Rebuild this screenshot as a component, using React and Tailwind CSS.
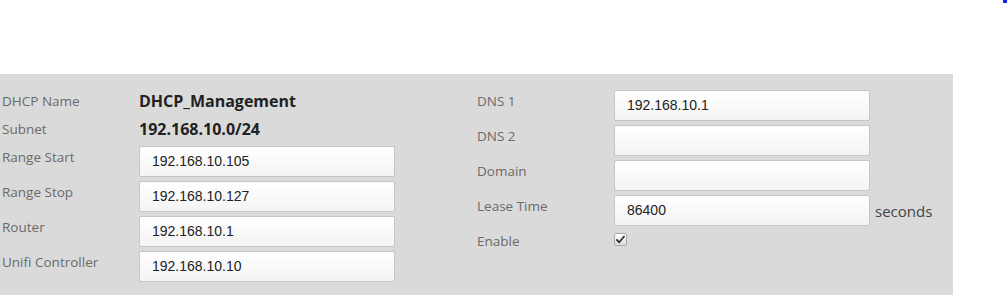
import React from 'react';

const Field = ({ value }) => (
  <div className="h-[31px] w-[256px] rounded-[2px] border border-[#c6c6c6] bg-gradient-to-b from-white to-[#f4f4f4] pl-[12px] flex items-center font-['Liberation_Sans',Arial,sans-serif] text-[14px] text-[#222]">
    {value}
  </div>
);

const Row = ({ label, labelWidth, children }) => (
  <div className="flex h-[35px] items-start">
    <div className={`${labelWidth} pt-[2px] leading-[18px] text-[13.5px] text-[#6a6a6a]`}>{label}</div>
    {children}
  </div>
);

const App = () => {
  const leftInputs = [
    ['Range Start', '192.168.10.105'],
    ['Range Stop', '192.168.10.127'],
    ['Router', '192.168.10.1'],
    ['Unifi Controller', '192.168.10.10'],
  ];
  const rightInputs = [
    ['DNS 1', '192.168.10.1'],
    ['DNS 2', ''],
    ['Domain', ''],
  ];

  return (
    <div className="relative h-[295px] w-[1007px] bg-white font-['Open_Sans',sans-serif]">
      {/* small link fragment at the top right */}
      <div className="absolute right-0 top-0 h-[3px] w-[4px] bg-[#1a1aff]" />

      <div className="pt-[74px]">
        <div className="flex h-[221px] w-[953px] bg-[#dadada]">
          {/* Left column */}
          <div className="w-[477px] pl-[2px]">
            <div className="flex h-[28px] items-center mt-[13px]">
              <div className="w-[137px] text-[13.5px] text-[#6a6a6a]">DHCP Name</div>
              <div className="text-[16px] font-bold text-[#222]">DHCP_Management</div>
            </div>
            <div className="flex h-[28px] items-center">
              <div className="w-[137px] text-[13.5px] text-[#6a6a6a]">Subnet</div>
              <div className="text-[16px] font-bold text-[#222]">192.168.10.0/24</div>
            </div>
            <div className="mt-[3px]">
              {leftInputs.map(([label, value]) => (
                <Row key={label} label={label} labelWidth="w-[137px]">
                  <Field value={value} />
                </Row>
              ))}
            </div>
          </div>

          {/* Right column */}
          <div className="pt-[16px]">
            {rightInputs.map(([label, value]) => (
              <Row key={label} label={label} labelWidth="w-[137px]">
                <Field value={value} />
              </Row>
            ))}
            <Row label="Lease Time" labelWidth="w-[137px]">
              <Field value="86400" />
              <span className="ml-[5px] pt-[6px] leading-[20px] text-[15px] text-[#444]">seconds</span>
            </Row>
            <Row label="Enable" labelWidth="w-[137px]">
              <span className="mt-[3px] flex h-[13px] w-[13px] items-center justify-center rounded-[2px] border border-[#a8a8a8] bg-gradient-to-b from-white to-[#dcdcdc]">
                <svg width="9" height="9" viewBox="0 0 9 9">
                  <path d="M1 5 L3.3 7.3 L8 1.5" fill="none" stroke="#333" strokeWidth="1.8" strokeLinecap="round" strokeLinejoin="round" />
                </svg>
              </span>
            </Row>
          </div>
        </div>
      </div>
    </div>
  );
};

export default App;
